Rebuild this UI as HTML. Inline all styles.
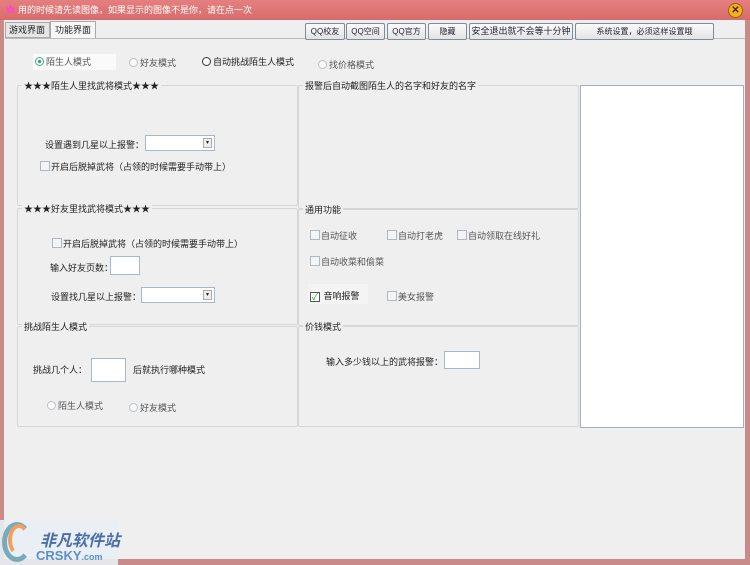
<!DOCTYPE html><html><head><meta charset="utf-8"><style>
*{margin:0;padding:0;box-sizing:border-box}
body{width:750px;height:565px;overflow:hidden;background:#fff;font-family:"Liberation Sans","Noto Sans CJK SC",sans-serif;font-size:9px;color:#222;position:relative}
.a{position:absolute;white-space:nowrap}
.win{position:absolute;left:0;top:0;width:750px;height:565px;background:#c98a8a}
.body{position:absolute;left:4px;top:20px;width:741px;height:539px;background:#efefef}
.title{position:absolute;left:0;top:0;width:750px;height:20px;background:linear-gradient(#e58080,#d86c6c);color:#fff;font-size:9px;line-height:20px;padding-left:18px;white-space:nowrap}
.grp{position:absolute;border:1px solid #d6d6d6;border-radius:2px}
.gl{position:absolute;top:-7px;left:4px;background:#efefef;padding:0 2px;font-size:9px;color:#222;white-space:nowrap}
.btn{position:absolute;top:23px;height:17px;border:1px solid #7f8a9a;border-radius:2px;background:linear-gradient(#fbfbfb,#e3e3e3);font-size:8px;line-height:15px;text-align:center;color:#223;white-space:nowrap;overflow:hidden}
.cb{display:inline-block;width:10px;height:10px;border:1px solid #b0b8c4;background:#f4f4f4;vertical-align:-1px;margin-right:1px}
.rd{display:inline-block;width:9px;height:9px;border:1px solid #b8c0c8;border-radius:50%;background:#fafafa;vertical-align:-1px;margin-right:2px}
.inp{position:absolute;background:#fff;border:1px solid #a9b8c8}
.g{color:#555}
</style></head><body>
<div class="win"></div>
<div class="title"><span class="a" style="left:6px;top:0;color:#f4c">✿</span>用的时候请先读图像，如果显示的图像不是你，请在点一次</div>
<div class="a" style="left:728px;top:3px;width:15px;height:15px;border-radius:50%;background:#f2b020;border:1px solid #a46000;color:#422;font-size:10px;line-height:13px;text-align:center;font-weight:bold">✕</div>
<div class="body"></div>
<div class="a" style="left:5px;top:22px;width:45px;height:16px;border:1px solid #aaa;background:#e6e6e6;font-size:9px;line-height:14px;padding-left:3px">游戏界面</div>
<div class="a" style="left:50px;top:21px;width:46px;height:18px;border:1px solid #aaa;border-bottom:none;background:#f7f7f7;font-size:9px;line-height:16px;padding-left:4px">功能界面</div>
<div class="a" style="left:5px;top:38px;width:740px;height:1px;background:#bbb"></div>
<div class="btn" style="left:305px;width:40px">QQ校友</div>
<div class="btn" style="left:346px;width:39px">QQ空间</div>
<div class="btn" style="left:387px;width:39px">QQ官方</div>
<div class="btn" style="left:428px;width:39px">隐藏</div>
<div class="btn" style="left:469px;width:104px;font-size:9px">安全退出就不会等十分钟</div>
<div class="btn" style="left:575px;width:139px">系统设置，必须这样设置哦</div>

<div class="a" style="left:33px;top:54px;width:83px;height:16px;background:#fafafa;line-height:16px;padding-left:2px" ><span class="rd" style="border-color:#4a8;background:radial-gradient(#3a6 30%,#fff 40%)"></span><span class="g">陌生人模式</span></div>
<div class="a g" style="left:129px;top:56px"><span class="rd"></span>好友模式</div>
<div class="a" style="left:202px;top:55px"><span class="rd" style="border-color:#333"></span>自动挑战陌生人模式</div>
<div class="a g" style="left:318px;top:58px"><span class="rd"></span>找价格模式</div>

<div class="grp" style="left:17px;top:85px;width:281px;height:121px"><span class="gl">★★★陌生人里找武将模式★★★</span></div>
<div class="a" style="left:45px;top:138px">设置遇到几星以上报警：</div>
<div class="inp" style="left:145px;top:135px;width:70px;height:16px"><span class="a" style="right:2px;top:2px;width:9px;height:10px;border:1px solid #aaa;background:#eee;font-size:6px;line-height:9px;text-align:center">▾</span></div>
<div class="a" style="left:40px;top:160px"><span class="cb"></span>开启后脱掉武将（占领的时候需要手动带上）</div>

<div class="grp" style="left:17px;top:208px;width:281px;height:117px"><span class="gl">★★★好友里找武将模式★★★</span></div>
<div class="a" style="left:52px;top:237px"><span class="cb"></span>开启后脱掉武将（占领的时候需要手动带上）</div>
<div class="a" style="left:50px;top:261px">输入好友页数：</div>
<div class="inp" style="left:110px;top:256px;width:30px;height:19px"></div>
<div class="a" style="left:51px;top:290px">设置找几星以上报警：</div>
<div class="inp" style="left:141px;top:287px;width:74px;height:16px"><span class="a" style="right:2px;top:2px;width:9px;height:10px;border:1px solid #aaa;background:#eee;font-size:6px;line-height:9px;text-align:center">▾</span></div>

<div class="grp" style="left:17px;top:326px;width:281px;height:101px"><span class="gl">挑战陌生人模式</span></div>
<div class="a" style="left:33px;top:363px">挑战几个人：</div>
<div class="inp" style="left:91px;top:358px;width:35px;height:24px"></div>
<div class="a" style="left:133px;top:363px">后就执行哪种模式</div>
<div class="a g" style="left:47px;top:399px"><span class="rd"></span>陌生人模式</div>
<div class="a g" style="left:129px;top:401px"><span class="rd"></span>好友模式</div>

<div class="grp" style="left:298px;top:85px;width:281px;height:124px"><span class="gl">报警后自动截图陌生人的名字和好友的名字</span></div>
<div class="grp" style="left:298px;top:209px;width:281px;height:117px"><span class="gl">通用功能</span></div>
<div class="a g" style="left:310px;top:229px"><span class="cb"></span>自动征收</div>
<div class="a g" style="left:387px;top:229px"><span class="cb"></span>自动打老虎</div>
<div class="a g" style="left:457px;top:229px"><span class="cb"></span>自动领取在线好礼</div>
<div class="a g" style="left:310px;top:255px"><span class="cb"></span>自动收菜和偷菜</div>
<div class="a" style="left:308px;top:284px;width:60px;height:20px;background:#f4f4f4"></div>
<div class="a" style="left:310px;top:289px"><span class="cb" style="border-color:#555;background:#fff;color:#1a1;font-size:9px;line-height:8px;text-align:center">✓</span> 音响报警</div>
<div class="a g" style="left:387px;top:290px"><span class="cb"></span>美女报警</div>
<div class="grp" style="left:298px;top:326px;width:281px;height:101px"><span class="gl">价钱模式</span></div>
<div class="a" style="left:326px;top:355px">输入多少钱以上的武将报警：</div>
<div class="inp" style="left:444px;top:351px;width:36px;height:18px"></div>

<div class="inp" style="left:580px;top:85px;width:164px;height:343px;border-color:#a0b0c4"></div>

<div class="a" style="left:0;top:520px;width:118px;height:45px;background:#e8eef4;opacity:.9"></div>
<div class="a" style="left:2px;top:522px;width:30px;height:40px;border-radius:50%;border:5px solid #7ab;border-right-color:transparent"></div>
<div class="a" style="left:8px;top:524px;width:22px;height:32px;border-radius:50%;border:4px solid #f0a060;border-right-color:transparent;border-bottom-color:transparent"></div>
<div class="a" style="left:40px;top:527px;font-size:16px;font-weight:bold;font-style:italic;color:#4a6fa8">非凡软件站</div>
<div class="a" style="left:36px;top:548px;font-size:13px;font-weight:bold;color:#5a8fc8">CRSKY<span style="font-size:9px">.com</span></div>
</body></html>
